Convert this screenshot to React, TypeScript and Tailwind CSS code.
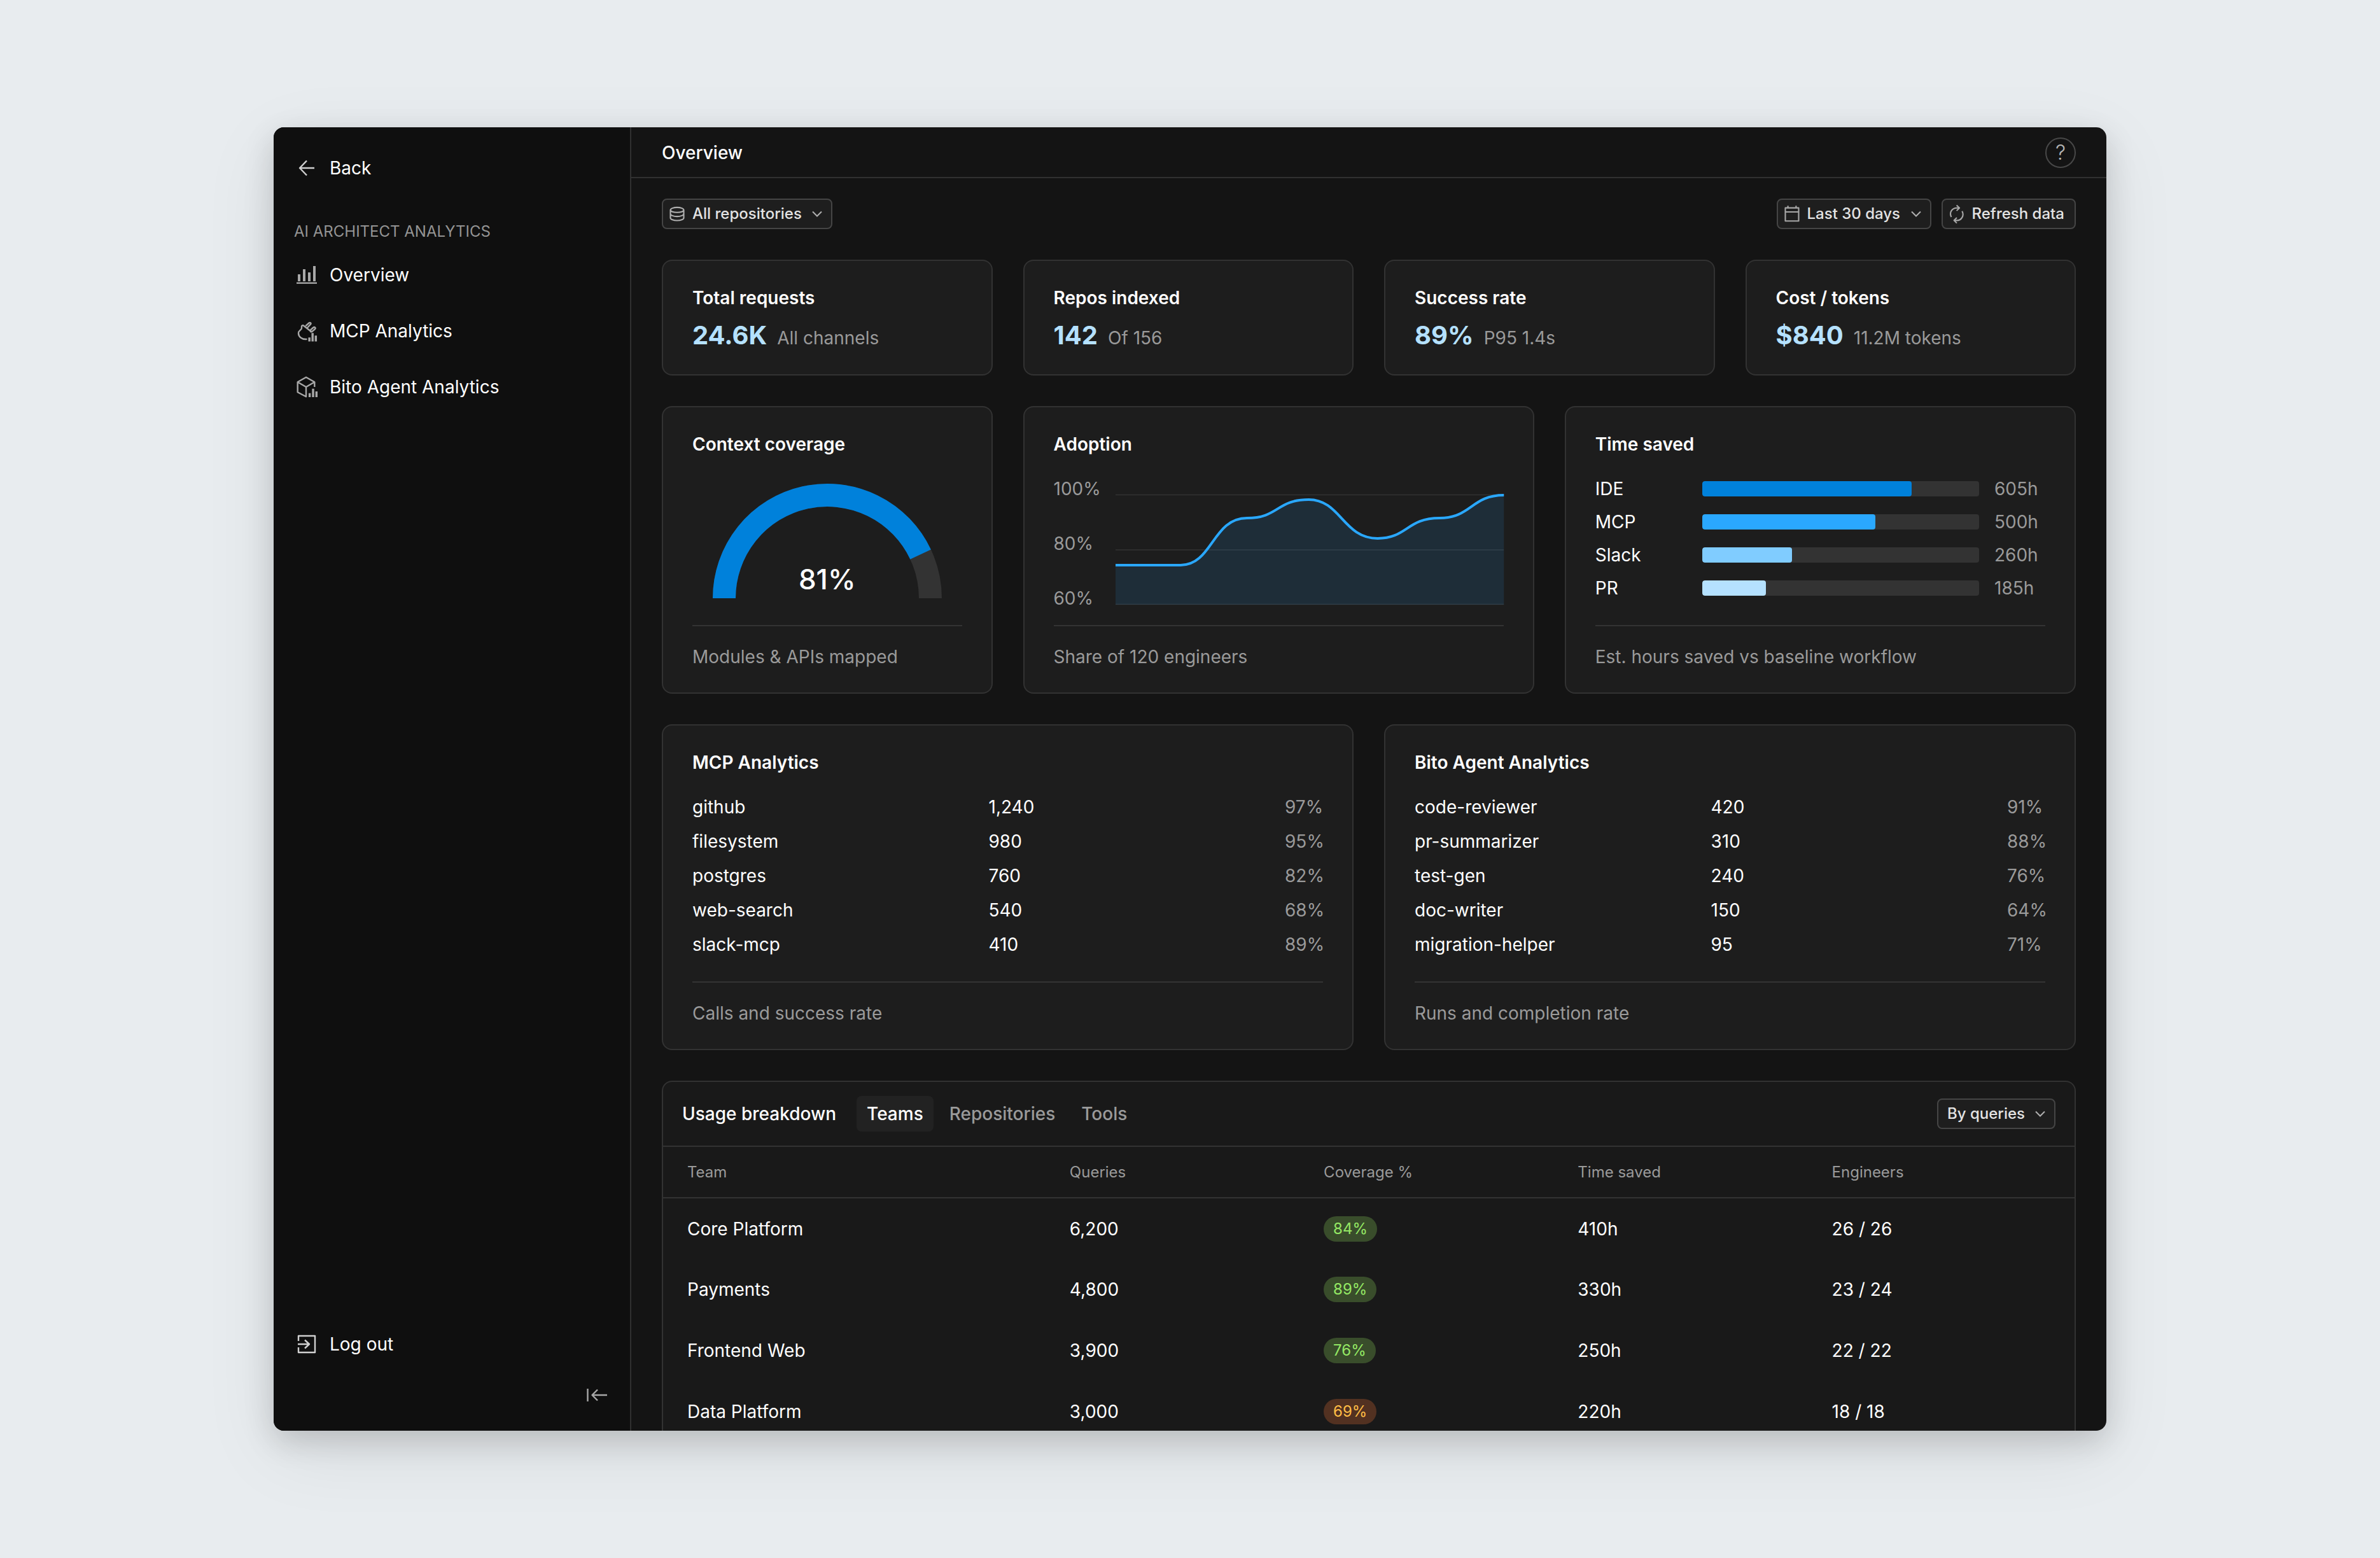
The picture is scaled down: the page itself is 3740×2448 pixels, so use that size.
import type { ReactNode } from "react";

const stats = [
  { title: "Total requests", value: "24.6K", note: "All channels" },
  { title: "Repos indexed", value: "142", note: "Of 156" },
  { title: "Success rate", value: "89%", note: "P95 1.4s" },
  { title: "Cost / tokens", value: "$840", note: "11.2M tokens" },
];

const timeSaved = [
  { label: "IDE", hours: 605, color: "bg-[#0081db]" },
  { label: "MCP", hours: 500, color: "bg-[#2aa8ff]" },
  { label: "Slack", hours: 260, color: "bg-[#80ccff]" },
  { label: "PR", hours: 185, color: "bg-[#b5e1ff]" },
];

const mcpRows = [
  ["github", "1,240", "97%"],
  ["filesystem", "980", "95%"],
  ["postgres", "760", "82%"],
  ["web-search", "540", "68%"],
  ["slack-mcp", "410", "89%"],
];

const agentRows = [
  ["code-reviewer", "420", "91%"],
  ["pr-summarizer", "310", "88%"],
  ["test-gen", "240", "76%"],
  ["doc-writer", "150", "64%"],
  ["migration-helper", "95", "71%"],
];

const teams = [
  { name: "Core Platform", queries: "6,200", coverage: 84, saved: "410h", engineers: "26 / 26" },
  { name: "Payments", queries: "4,800", coverage: 89, saved: "330h", engineers: "23 / 24" },
  { name: "Frontend Web", queries: "3,900", coverage: 76, saved: "250h", engineers: "22 / 22" },
  { name: "Data Platform", queries: "3,000", coverage: 69, saved: "220h", engineers: "18 / 18" },
];

function Icon({ children, className = "size-8 text-[#a8a8a8]" }: { children: ReactNode; className?: string }) {
  return (
    <svg
      viewBox="0 0 32 32"
      fill="none"
      stroke="currentColor"
      strokeWidth="2.4"
      strokeLinejoin="round"
      aria-hidden="true"
      className={`shrink-0 overflow-visible ${className}`}
    >
      {children}
    </svg>
  );
}

function Chevron() {
  return (
    <svg viewBox="0 0 24 24" fill="none" stroke="currentColor" strokeWidth="2" aria-hidden="true" className="pointer-events-none size-6 shrink-0 text-[#b0b0b0]">
      <path d="M5 8.500 12 15.500 19 8.500" />
    </svg>
  );
}

function Select({ label, value, icon }: { label: string; value: string; icon?: ReactNode }) {
  return (
    <div className="flex h-12 items-center rounded-lg border-2 border-[#454545] bg-[#1e1e1e] px-2.5">
      {icon}
      <select
        aria-label={label}
        className={`appearance-none bg-transparent text-2xl font-medium text-[#e3e3e3] outline-none ${icon ? "ml-3" : "ml-1"}`}
      >
        <option>{value}</option>
      </select>
      <span className="ml-3">
        <Chevron />
      </span>
    </div>
  );
}

function NavItem({ icon, children }: { icon: ReactNode; children: ReactNode }) {
  return (
    <a href="#" className="flex h-12 items-center gap-5 text-[28px] leading-10 text-white">
      {icon}
      {children}
    </a>
  );
}

function Card({ title, footer, className, children }: { title: string; footer?: string; className: string; children: ReactNode }) {
  return (
    <section className={`flex flex-col rounded-2xl border-2 border-[#323232] bg-[#1d1d1d] px-[46px] py-[38px] ${className}`}>
      <h2 className="text-[28px] font-semibold leading-10 text-white">{title}</h2>
      {children}
      {footer && (
        <p className="mt-auto border-t-2 border-[#333] pt-[30px] text-[28px] leading-9 text-[#9a9a9a]">{footer}</p>
      )}
    </section>
  );
}

function Sidebar() {
  return (
    <aside className="flex w-[562px] shrink-0 flex-col border-r-2 border-[#303030] bg-[#0f0f0f] pt-10 pl-8">
      <NavItem
        icon={
          <Icon className="ml-1 size-8 text-[#d0d0d0]">
            <path d="M28 16H5M16 4.500 5 16 16 27.500" />
          </Icon>
        }
      >
        Back
      </NavItem>
      <h2 className="mt-13 text-2xl leading-12 text-[#949494]">AI ARCHITECT ANALYTICS</h2>
      <nav className="mt-5 flex flex-col gap-10 pl-1">
        <NavItem
          icon={
            <Icon>
              <path d="M0 28.700H32" />
              <path d="M4 15V26M12 7V26M20 12V26M28 2V26" strokeWidth="4" />
            </Icon>
          }
        >
          Overview
        </NavItem>
        <NavItem
          icon={
            <Icon>
              <path
                strokeLinecap="round"
                d="M15.500 29C8 29.500 3 25 3 19.500C3 15 8 14.500 8 11.500V9C8 7.500 10 6.500 11.500 8L23 17M15 7.500 19.500 3.500C21.500 2 23.500 4 22 5.500L16.500 11.500M22.500 14 26.500 10.500C28.500 9 30.500 11.500 29 13L24.500 16.800C23.500 17.600 22.800 17.600 22 17"
              />
              <path d="M20.200 26.300V32.600M25.200 19.300V32.600M30.300 23.300V32.600" strokeWidth="3.500" />
            </Icon>
          }
        >
          MCP Analytics
        </NavItem>
        <NavItem
          icon={
            <Icon>
              <path d="M28.300 16V8.300L15 .7 1.700 8.300V24.300L15 31.300V16M1.700 8.300 15 16 28.300 8.300" />
              <path d="M20.600 25.700V32M26 18.700V32M31.300 23V32" strokeWidth="3.400" />
            </Icon>
          }
        >
          Bito Agent Analytics
        </NavItem>
      </nav>
      <div className="mt-auto pl-1">
        <NavItem
          icon={
            <Icon className="size-8 text-[#d0d0d0]">
              <path d="M3 11V3H29V29H3V21M2 16H20M13 9.500 20 16 13 22.500" />
            </Icon>
          }
        >
          Log out
        </NavItem>
      </div>
      <button type="button" aria-label="Collapse sidebar" className="mt-8 mr-7 mb-8 flex h-12 w-10 items-center self-end">
        <Icon>
          <path d="M1.500 6V26M32 16H9M17 7.500 8.500 16 17 24.500" />
        </Icon>
      </button>
    </aside>
  );
}

function Gauge() {
  return (
    <div className="mt-[42px] grid justify-items-center">
      <svg viewBox="0 0 360 180" className="col-start-1 row-start-1 h-[180px] w-[360px]" fill="none" strokeWidth="36" aria-hidden="true">
        <path d="M18 180A162 162 0 0 1 342 180" stroke="#333333" />
        <path d="M18 180A162 162 0 0 1 326.600 111.100" stroke="#0081db" />
      </svg>
      <span className="col-start-1 row-start-1 self-end text-[44px] font-medium leading-15 text-white">81%</span>
    </div>
  );
}

function AdoptionChart() {
  const line =
    "M0 111H102C152 111 152 37 206 37C256 37 252 8 303 8C353 8 357 69 411 69C457 69 457 37 508 37C558 37 558 1 609 1";
  return (
    <div className="mt-[30px] flex">
      <div className="flex w-[97px] shrink-0 flex-col gap-[46px] text-[28px] leading-10 text-[#9a9a9a]">
        <span>100%</span>
        <span>80%</span>
        <span>60%</span>
      </div>
      <svg viewBox="0 0 609 176" preserveAspectRatio="none" className="mt-[29px] h-44 w-full min-w-0 flex-1 overflow-visible" fill="none" aria-label="Adoption over time">
        <path d="M0 .5H609M0 87H609M0 172.500H609" stroke="#333333" strokeWidth="1.500" />
        <path d={`${line}V173H0Z`} fill="#2aa8ff" fillOpacity="0.12" />
        <path d={line} stroke="#2aa8ff" strokeWidth="4" />
      </svg>
    </div>
  );
}

function TimeSaved() {
  return (
    <ul className="mt-[30px] flex flex-col gap-3 text-[28px] leading-10">
      {timeSaved.map((row) => (
        <li key={row.label} className="flex items-center">
          <span className="w-42 shrink-0 text-white">{row.label}</span>
          <div className="h-6 flex-1 overflow-hidden rounded-sm bg-[#333]">
            <div className={`h-full rounded-sm ${row.color}`} style={{ width: `${row.hours / 8}%` }} />
          </div>
          <span className="ml-6 w-20 shrink-0 text-[#9a9a9a]">{row.hours}h</span>
        </li>
      ))}
    </ul>
  );
}

function MiniTable({ rows }: { rows: string[][] }) {
  return (
    <table className="mt-[23px] w-full table-fixed text-left text-[28px] leading-9">
      <tbody>
        {rows.map(([name, count, rate]) => (
          <tr key={name} className="h-[54px] text-white">
            <td>{name}</td>
            <td>{count}</td>
            <td className="w-[60px] whitespace-nowrap text-[#9a9a9a]">{rate}</td>
          </tr>
        ))}
      </tbody>
    </table>
  );
}

function UsageBreakdown() {
  return (
    <section className="col-span-8 rounded-t-2xl border-2 border-[#323232] bg-[#191919]">
      <div className="flex h-[102px] items-center border-b-2 border-[#333] px-[30px] text-[28px] font-medium leading-10">
        <h2 className="mr-8 text-white">Usage breakdown</h2>
        <div role="tablist" className="flex gap-[9px]">
          <button type="button" role="tab" aria-selected="true" className="h-14 rounded-lg bg-[#222] px-4 text-white">
            Teams
          </button>
          <button type="button" role="tab" aria-selected="false" className="h-14 px-4 text-[#9a9a9a]">
            Repositories
          </button>
          <button type="button" role="tab" aria-selected="false" className="h-14 px-4 text-[#9a9a9a]">
            Tools
          </button>
        </div>
        <div className="ml-auto">
          <Select label="Sort by" value="By queries" />
        </div>
      </div>
      <table className="w-full table-fixed text-left">
        <thead>
          <tr className="h-20 border-b-2 border-[#333] text-2xl text-[#9a9a9a]">
            <th className="w-[27%] pl-[38px] font-normal">Team</th>
            <th className="w-[18%] pl-10 font-normal">Queries</th>
            <th className="w-[18%] pl-10 font-normal">Coverage %</th>
            <th className="w-[18%] pl-10 font-normal">Time saved</th>
            <th className="pl-10 font-normal">Engineers</th>
          </tr>
        </thead>
        <tbody>
          {teams.map((team) => (
            <tr key={team.name} className="h-24 text-[28px] text-white">
              <td className="pl-[38px]">{team.name}</td>
              <td className="pl-10">{team.queries}</td>
              <td className="pl-10">
                <span
                  className={`flex h-10 w-fit items-center rounded-full px-[15px] text-2xl ${
                    team.coverage >= 75 ? "bg-[#394d2b] text-[#94e864]" : "bg-[#523121] text-[#ffbd45]"
                  }`}
                >
                  {team.coverage}%
                </span>
              </td>
              <td className="pl-10">{team.saved}</td>
              <td className="pl-10">{team.engineers}</td>
            </tr>
          ))}
        </tbody>
      </table>
    </section>
  );
}

export default function App() {
  return (
    <div className="flex h-screen bg-[#e8ecef] px-[430px] py-[200px] font-[Inter,sans-serif]">
      <div className="flex min-w-0 flex-1 overflow-hidden rounded-2xl bg-[#141414] shadow-[0_16px_48px_rgba(0,0,0,0.16),0_32px_120px_rgba(0,0,0,0.08)]">
        <Sidebar />
        <main className="flex min-w-0 flex-1 flex-col">
          <header className="flex h-20 shrink-0 items-center justify-between border-b-2 border-[#303030] px-12 pt-0.5">
            <h1 className="text-[28px] font-medium leading-10 text-white">Overview</h1>
            <button type="button" aria-label="Help" className="flex size-12 items-center justify-center rounded-full border-2 border-[#484848] text-[32px] leading-10 font-light text-[#b5b5b5]">
              ?
            </button>
          </header>
          <div className="flex-1 overflow-hidden px-12 pt-8">
            <div className="flex items-center gap-4">
              <Select
                label="Repositories"
                value="All repositories"
                icon={
                  <Icon className="size-6 text-[#b0b0b0]">
                    <path strokeWidth="2.800" d="M30 8C30 10.800 23.700 13 16 13S2 10.800 2 8S8.300 2.500 16 2.500S30 5.200 30 8V24.500C30 27.300 23.700 30 16 30S2 27.300 2 24.500V8M2 16C2 18.800 8.300 21.500 16 21.500S30 18.800 30 16" />
                  </Icon>
                }
              />
              <div className="ml-auto">
                <Select
                  label="Period"
                  value="Last 30 days"
                  icon={
                    <Icon className="size-6 text-[#a8a8a8]">
                      <path strokeWidth="2.800" d="M2 3.500H30V31H2ZM2 12H30M7.500-1V3.500M24.500-1V3.500" />
                    </Icon>
                  }
                />
              </div>
              <button type="button" className="flex h-12 items-center gap-3 rounded-lg border-2 border-[#454545] bg-[#1e1e1e] pr-4 pl-2.5 text-2xl font-medium text-[#e3e3e3]">
                <Icon className="size-6 text-[#a8a8a8]">
                  <path strokeWidth="2.800" d="M4.500 22.700C-.5 13 6 3.600 16 3.600H21M15.500-2 21.500 3.600 15.500 9.500M27 10.200C32 19.500 26 29.800 16 29.800H10.500M16 24 10.200 29.800 16 35.500" />
                </Icon>
                Refresh data
              </button>
            </div>
            <div className="mt-12 grid grid-cols-8 gap-12">
              {stats.map((stat) => (
                <Card key={stat.title} title={stat.title} className="col-span-2">
                  <p className="mt-4 flex items-baseline gap-4 text-[28px] leading-9 text-[#9a9a9a]">
                    <strong className="text-[40px] font-bold leading-[46px] text-[#b5e1ff]">{stat.value}</strong>
                    {stat.note}
                  </p>
                </Card>
              ))}
              <Card title="Context coverage" footer="Modules & APIs mapped" className="col-span-2 h-[452px]">
                <Gauge />
              </Card>
              <Card title="Adoption" footer="Share of 120 engineers" className="col-span-3">
                <AdoptionChart />
              </Card>
              <Card title="Time saved" footer="Est. hours saved vs baseline workflow" className="col-span-3">
                <TimeSaved />
              </Card>
              <Card title="MCP Analytics" footer="Calls and success rate" className="col-span-4 h-[512px]">
                <MiniTable rows={mcpRows} />
              </Card>
              <Card title="Bito Agent Analytics" footer="Runs and completion rate" className="col-span-4">
                <MiniTable rows={agentRows} />
              </Card>
              <UsageBreakdown />
            </div>
          </div>
        </main>
      </div>
    </div>
  );
}
